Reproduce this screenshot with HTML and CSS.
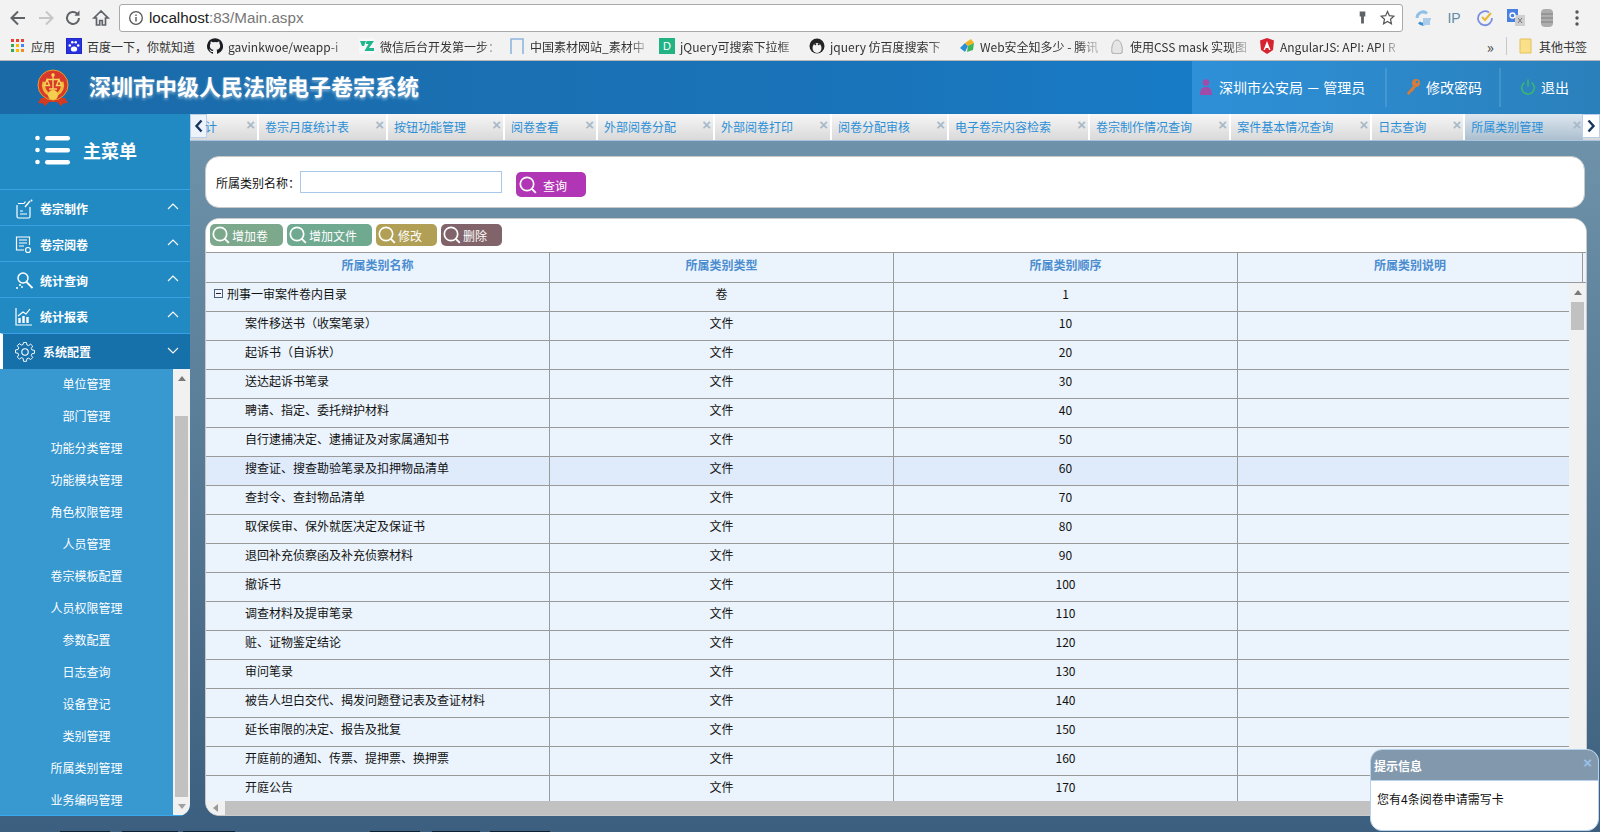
FILE: index.html
```html
<!DOCTYPE html>
<html lang="zh-CN">
<head>
<meta charset="utf-8">
<title>深圳市中级人民法院电子卷宗系统</title>
<link rel="stylesheet" href="styles.css">
</head>
<body>
<div class="browser">
  <div class="toolbar">
    <svg class="nav" viewBox="0 0 20 20"><path d="M17 10H4M10 3.500 3.500 10l6.500 6.500" fill="none" stroke="#5f6368" stroke-width="2"/></svg>
    <svg class="nav" viewBox="0 0 20 20"><path d="M3 10h13M10 3.500l6.500 6.500-6.500 6.500" fill="none" stroke="#c4c6c8" stroke-width="2"/></svg>
    <svg class="nav" viewBox="0 0 20 20"><path d="M16 10a6 6 0 1 1-1.800-4.300" fill="none" stroke="#5f6368" stroke-width="2"/><path d="M16.500 2.500v5.200h-5.200z" fill="#5f6368"/></svg>
    <svg class="nav" viewBox="0 0 20 20"><path d="M10 3 3 10h2.500v7h3.200v-4.500h2.600V17h3.200v-7H17z" fill="none" stroke="#5f6368" stroke-width="1.700"/></svg>
    <div class="address">
      <svg class="info" viewBox="0 0 16 16"><circle cx="8" cy="8" r="6.300" fill="none" stroke="#555" stroke-width="1.300"/><path d="M8 7v4.500M8 4.500v1.400" stroke="#555" stroke-width="1.400"/></svg>
      <span class="host">localhost</span><span class="path">:83/Main.aspx</span>
      <span class="spacer"></span>
      <svg class="addr-ico" viewBox="0 0 16 16"><path d="M5 1.500h6v5.500H9.500v7.500h-3V7H5z" fill="#5f6368"/></svg>
      <svg class="addr-ico star" viewBox="0 0 16 16"><path d="m8 1.600 2 4.500 4.800.5-3.600 3.200 1 4.800L8 12.200l-4.200 2.400 1-4.800L1.200 6.600 6 6.100z" fill="none" stroke="#555" stroke-width="1.300"/></svg>
    </div>
    <div class="exts">
      <svg viewBox="0 0 18 18"><path d="M3 9a6 6 0 0 1 10-4.500" fill="none" stroke="#8fc0e6" stroke-width="3"/><path d="M15 9a6 6 0 0 1-10 4.500" fill="none" stroke="#3f8ed0" stroke-width="3"/><rect x="9" y="9" width="7" height="7" fill="#a9cdea"/></svg>
      <span class="ext-ip">IP</span>
      <svg viewBox="0 0 18 18"><path d="M13 3.500A7 7 0 1 0 16 9" fill="none" stroke="#7a8fe0" stroke-width="1.800"/><path d="m6 8 3 3 6-7" fill="none" stroke="#eab733" stroke-width="2"/></svg>
      <svg viewBox="0 0 18 18"><rect x="0" y="0" width="11" height="13" fill="#4a80e0"/><rect x="8" y="6" width="10" height="11" fill="#cfcfcf"/><circle cx="5.500" cy="6.500" r="2.500" fill="none" stroke="#fff" stroke-width="1.300"/><path d="m11 9 4 5M15 9l-4 5" stroke="#777" stroke-width="1"/></svg>
      <svg viewBox="0 0 18 18"><rect x="3" y="0" width="12" height="18" rx="4" fill="#adadad"/><path d="M3 5h12M3 9h12M3 13h12" stroke="#8e8e8e" stroke-width="1.500"/></svg>
      <svg class="dots" viewBox="0 0 6 18"><circle cx="3" cy="3" r="1.700" fill="#555"/><circle cx="3" cy="9" r="1.700" fill="#555"/><circle cx="3" cy="15" r="1.700" fill="#555"/></svg>
    </div>
  </div>
  <div class="bookmarks">
    <div class="bm bm-apps">
      <svg class="bm-ico" viewBox="0 0 14 14"><g><rect x="0" y="0" width="3" height="3" fill="#e94235"/><rect x="5" y="0" width="3" height="3" fill="#e94235"/><rect x="10" y="0" width="3" height="3" fill="#e94235"/><rect x="0" y="5" width="3" height="3" fill="#34a853"/><rect x="5" y="5" width="3" height="3" fill="#fbbc05"/><rect x="10" y="5" width="3" height="3" fill="#4285f4"/><rect x="0" y="10" width="3" height="3" fill="#34a853"/><rect x="5" y="10" width="3" height="3" fill="#fbbc05"/><rect x="10" y="10" width="3" height="3" fill="#f28b1a"/></g></svg>
      <span>应用</span>
    </div>
    <div class="bm bm-baidu">
      <svg class="bm-ico" viewBox="0 0 16 16"><rect x=".5" y=".5" width="15" height="15" fill="#2932e1" stroke="#1f27c4"/><ellipse cx="8" cy="11" rx="3.200" ry="2.600" fill="#fff"/><circle cx="3.800" cy="7.500" r="1.300" fill="#fff"/><circle cx="12.200" cy="7.500" r="1.300" fill="#fff"/><circle cx="6.300" cy="4.300" r="1.300" fill="#fff"/><circle cx="9.700" cy="4.300" r="1.300" fill="#fff"/></svg>
      <span>百度一下，你就知道</span>
    </div>
    <div class="bm bm-w152">
      <svg class="bm-ico" viewBox="0 0 16 16"><path d="M8 .2a8 8 0 0 0-2.500 15.600c.4.100.5-.2.500-.4v-1.400c-2.200.5-2.700-1-2.700-1-.4-.9-.9-1.200-.9-1.200-.7-.5.100-.5.100-.5.800.1 1.200.8 1.200.8.700 1.200 1.900.9 2.300.7.100-.5.300-.9.500-1.100-1.800-.2-3.600-.9-3.600-4 0-.9.300-1.600.8-2.100-.1-.2-.4-1 .1-2.100 0 0 .7-.2 2.200.8a7.600 7.600 0 0 1 4 0c1.500-1 2.200-.8 2.200-.8.400 1.100.2 1.900.1 2.100.5.600.8 1.300.8 2.100 0 3.100-1.900 3.800-3.700 4 .3.300.6.700.6 1.500v2.200c0 .2.100.5.600.4A8 8 0 0 0 8 .2z" fill="#1b1f23"/></svg>
      <span>gavinkwoe/weapp-i</span>
    </div>
    <div class="bm">
      <svg class="bm-ico" viewBox="0 0 16 16"><rect width="16" height="16" fill="#f7f7f7"/><path d="M1 3h6L5 8H3zM7.500 3H15l-5 7h5v3H5.500l4-7H7z" fill="#1fb58f"/></svg>
      <span>微信后台开发第一步：</span>
    </div>
    <div class="bm">
      <svg class="bm-ico" viewBox="0 0 16 16"><path d="M2 16V1h12v15" fill="none" stroke="#8fb6dd" stroke-width="1.600"/></svg>
      <span>中国素材网站_素材中</span>
    </div>
    <div class="bm">
      <svg class="bm-ico" viewBox="0 0 16 16"><rect width="16" height="16" fill="#21b384"/><text x="8" y="12" font-size="11" text-anchor="middle" fill="#fff" class="bm-letter">D</text></svg>
      <span>jQuery可搜索下拉框</span>
    </div>
    <div class="bm">
      <svg class="bm-ico" viewBox="0 0 16 16"><circle cx="8" cy="8" r="7.500" fill="#222"/><ellipse cx="8" cy="10" rx="4.500" ry="5" fill="#f3f3f3"/><circle cx="6.300" cy="6.300" r="1" fill="#222"/><circle cx="9.700" cy="6.300" r="1" fill="#222"/></svg>
      <span>jquery 仿百度搜索下</span>
    </div>
    <div class="bm">
      <svg class="bm-ico" viewBox="0 0 16 16"><path d="M1 10 6 5l3 3-3 6z" fill="#2c8fd6"/><path d="M6 5l6-4 3 4-6 3z" fill="#f2b320"/><path d="M9 8l6-3-1 7-6 2z" fill="#3fb55a"/></svg>
      <span>Web安全知多少 - 腾讯</span>
    </div>
    <div class="bm">
      <svg class="bm-ico" viewBox="0 0 16 16"><path d="M3 15c-1-6 1-13 5-13s6 7 5 13c-3 1-7 1-10 0z" fill="#e5e5e5" stroke="#aaa"/></svg>
      <span>使用CSS mask 实现图</span>
    </div>
    <div class="bm">
      <svg class="bm-ico" viewBox="0 0 16 16"><path d="M8 0 1 2.500 2 12l6 4 6-4 1-9.500z" fill="#d6232f"/><path d="M8 3 4.500 12h1.500l.7-2h2.600l.7 2H11.500z" fill="#fff"/></svg>
      <span>AngularJS: API: API R</span>
    </div>
    <div class="bm-end">
      <span class="more">»</span>
      <span class="bm-sep"></span>
      <svg class="bm-ico" viewBox="0 0 16 16"><path d="M2 1h11v14H2z" fill="#fbe08a" stroke="#e3c25c"/></svg>
      <span class="bm-other">其他书签</span>
    </div>
  </div>
</div>

<header class="app-head">
  <div class="brand">
    <svg class="emblem" viewBox="0 0 32 37">
      <path d="M4 29 1 34l5 .5 2 2.500 4-4h8l4 4 2-2.500 5-.5-3-5z" fill="#d33a22"/>
      <circle cx="16" cy="16" r="15" fill="#d8392a" stroke="#e6a02c" stroke-width="1"/>
      <path d="M5.500 12.500a12 12 0 0 0 6 14.500l2.500-2a10 10 0 0 1-5.500-12zM26.500 12.500a12 12 0 0 1-6 14.500l-2.500-2a10 10 0 0 0 5.500-12z" fill="#f0b93a"/>
      <circle cx="16" cy="26" r="5" fill="#f4cf4f"/>
      <path d="M16 4.500V20M10 10.500h12M10 10.500l-2.500 6h5zM22 10.500l-2.500 6h5zM12 20h8" stroke="#f6d35b" stroke-width="1.400" fill="none"/>
      <circle cx="16" cy="6" r="1.800" fill="#f6d35b"/>
    </svg>
    <h1 class="title">深圳市中级人民法院电子卷宗系统</h1>
  </div>
  <div class="user-area">
    <div class="user-cell user-cell-a">
      <svg class="head-ico" viewBox="0 0 16 18"><circle cx="8" cy="4.500" r="3.300" fill="#a04ca8"/><path d="M2 17c0-6 2-8 6-8s6 2 6 8z" fill="#a04ca8"/></svg>
      <span>深圳市公安局 － 管理员</span>
    </div>
    <div class="user-cell user-cell-b">
      <svg class="head-ico" viewBox="0 0 16 18"><circle cx="11" cy="5" r="4" fill="#d77b39"/><path d="M8.500 7.500 2 15l1 2 2-1 1-2 1.500-.5L11 9z" fill="#d77b39"/><circle cx="12" cy="4" r="1.200" fill="#2e8dd2"/></svg>
      <span>修改密码</span>
    </div>
    <div class="user-cell user-cell-c">
      <svg class="head-ico" viewBox="0 0 16 18"><path d="M4.500 4.500a6.300 6.300 0 1 0 7 0" fill="none" stroke="#3dba6b" stroke-width="1.500"/><path d="M8 1.500v7" stroke="#3dba6b" stroke-width="1.500"/></svg>
      <span>退出</span>
    </div>
  </div>
</header>

<div class="app-body">
  <aside class="sidebar">
    <div class="menu-title">
      <svg class="burger" viewBox="0 0 36 30"><g fill="#fff"><circle cx="2.500" cy="3" r="2.300"/><circle cx="2.500" cy="15" r="2.300"/><circle cx="2.500" cy="27" r="2.300"/><rect x="10" y="1" width="25" height="4.400" rx="2.200"/><rect x="10" y="13" width="25" height="4.400" rx="2.200"/><rect x="10" y="25" width="25" height="4.400" rx="2.200"/></g></svg>
      <span>主菜单</span>
    </div>
    <div class="menu-item">
      <svg class="mi" viewBox="0 0 18 20"><path d="M3 4.500h6l1.500-2M15 8v9.500a1.500 1.500 0 0 1-1.500 1.500h-10A1.500 1.500 0 0 1 2 17.500V6" fill="none" stroke="#fff" stroke-width="1.200"/><path d="M5 15h7M5 12h3" stroke="#fff" stroke-width="1.200"/><path d="m10 8 5-6" stroke="#fff" stroke-width="1.400"/><circle cx="16.500" cy="1.500" r="1" fill="#fff"/></svg>
      <span>卷宗制作</span>
      <svg class="chev" viewBox="0 0 12 7"><path d="m1 6 5-5 5 5" fill="none" stroke="#fff" stroke-width="1.100"/></svg>
    </div>
    <div class="menu-item">
      <svg class="mi" viewBox="0 0 18 20"><path d="M9 15H1.500V2h13v8" fill="none" stroke="#fff" stroke-width="1.200"/><path d="M4 5h8M4 8h8M4 11h5" stroke="#fff" stroke-width="1.200"/><circle cx="13" cy="15" r="2.500" fill="none" stroke="#fff" stroke-width="1.200"/></svg>
      <span>卷宗阅卷</span>
      <svg class="chev" viewBox="0 0 12 7"><path d="m1 6 5-5 5 5" fill="none" stroke="#fff" stroke-width="1.100"/></svg>
    </div>
    <div class="menu-item">
      <svg class="mi" viewBox="0 0 18 20"><circle cx="8" cy="7" r="5" fill="none" stroke="#fff" stroke-width="1.500"/><path d="m11.500 11 6 6" stroke="#fff" stroke-width="1.800"/><path d="M1 17h2M4 14h2M7 15v2" stroke="#fff" stroke-width="1.400"/></svg>
      <span>统计查询</span>
      <svg class="chev" viewBox="0 0 12 7"><path d="m1 6 5-5 5 5" fill="none" stroke="#fff" stroke-width="1.100"/></svg>
    </div>
    <div class="menu-item">
      <svg class="mi" viewBox="0 0 18 20"><path d="M1 1v17h16" fill="none" stroke="#fff" stroke-width="1.200"/><path d="M4.500 16v-5M8.500 16V9M12.500 16v-6" stroke="#fff" stroke-width="2.400"/><path d="m3 9 5-4 3 2 4-5" fill="none" stroke="#fff" stroke-width="1.200"/></svg>
      <span>统计报表</span>
      <svg class="chev" viewBox="0 0 12 7"><path d="m1 6 5-5 5 5" fill="none" stroke="#fff" stroke-width="1.100"/></svg>
    </div>
    <div class="menu-item active">
      <svg class="mi mi-gear" viewBox="0 0 20 20"><circle cx="10" cy="10" r="3.200" fill="none" stroke="#fff" stroke-width="1.100"/><path d="M8.500 1h3l.5 2.600 1.700.7L16 2.800l2.100 2.100-1.500 2.300.7 1.700 2.700.5v3l-2.700.5-.7 1.700 1.500 2.300-2.100 2.100-2.300-1.500-1.700.7-.5 2.700h-3L8 17.700l-1.700-.7L4 18.500l-2.100-2.100 1.500-2.300-.7-1.700L0 11.900v-3l2.700-.5.7-1.700-1.500-2.300L4 2.300l2.300 1.500L8 3.100z" fill="none" stroke="#fff" stroke-width="1" transform="translate(.5 -.5) scale(.95)"/></svg>
      <span>系统配置</span>
      <svg class="chev" viewBox="0 0 12 7"><path d="m1 1 5 5 5-5" fill="none" stroke="#fff" stroke-width="1.100"/></svg>
    </div>
    <div class="submenu">
      <ul class="sub-list">
        <li>单位管理</li><li>部门管理</li><li>功能分类管理</li><li>功能模块管理</li><li>角色权限管理</li><li>人员管理</li><li>卷宗模板配置</li><li>人员权限管理</li><li>参数配置</li><li>日志查询</li><li>设备登记</li><li>类别管理</li><li>所属类别管理</li><li>业务编码管理</li>
      </ul>
      <div class="vbar vbar-side">
        <i class="arrow-up"></i>
        <div class="vtrack"><div class="thumb-side"></div></div>
        <i class="arrow-down"></i>
      </div>
    </div>
  </aside>

  <main class="content">
    <nav class="tabs">
      <button class="tab-nav tab-prev" type="button"><svg viewBox="0 0 10 14"><path d="M7.500 1.500 2.500 7l5 5.500" fill="none" stroke="#16365f" stroke-width="2.400"/></svg></button>
      <div class="tab tab-first">计<b>×</b></div>
      <div class="tab">卷宗月度统计表<b>×</b></div>
      <div class="tab">按钮功能管理<b>×</b></div>
      <div class="tab">阅卷查看<b>×</b></div>
      <div class="tab">外部阅卷分配<b>×</b></div>
      <div class="tab">外部阅卷打印<b>×</b></div>
      <div class="tab">阅卷分配审核<b>×</b></div>
      <div class="tab">电子卷宗内容检索<b>×</b></div>
      <div class="tab">卷宗制作情况查询<b>×</b></div>
      <div class="tab">案件基本情况查询<b>×</b></div>
      <div class="tab">日志查询<b>×</b></div>
      <div class="tab tab-on">所属类别管理<b>×</b></div>
      <button class="tab-nav tab-next" type="button"><svg viewBox="0 0 10 14"><path d="m2.500 1.500 5 5.500-5 5.500" fill="none" stroke="#16365f" stroke-width="2.400"/></svg></button>
    </nav>
    <div class="panes">
      <section class="search-panel">
        <label class="search-label" for="q">所属类别名称：</label>
        <input id="q" class="search-input" type="text">
        <button class="btn btn-query" type="button">
          <svg class="btn-ico" viewBox="0 0 20 20"><circle cx="9" cy="9" r="6.700" fill="none" stroke="#fff" stroke-width="1.700"/><path d="m13.800 13.800 4 4" stroke="#fff" stroke-width="1.900"/></svg>
          <span>查询</span>
        </button>
      </section>
      <section class="grid-panel">
        <div class="grid-tools">
          <button class="btn btn-a" type="button"><svg class="btn-ico" viewBox="0 0 20 20"><circle cx="9" cy="9" r="6.700" fill="none" stroke="#fff" stroke-width="1.700"/><path d="m13.800 13.800 4 4" stroke="#fff" stroke-width="1.900"/></svg><span>增加卷</span></button>
          <button class="btn btn-b" type="button"><svg class="btn-ico" viewBox="0 0 20 20"><circle cx="9" cy="9" r="6.700" fill="none" stroke="#fff" stroke-width="1.700"/><path d="m13.800 13.800 4 4" stroke="#fff" stroke-width="1.900"/></svg><span>增加文件</span></button>
          <button class="btn btn-c" type="button"><svg class="btn-ico" viewBox="0 0 20 20"><circle cx="9" cy="9" r="6.700" fill="none" stroke="#fff" stroke-width="1.700"/><path d="m13.800 13.800 4 4" stroke="#fff" stroke-width="1.900"/></svg><span>修改</span></button>
          <button class="btn btn-d" type="button"><svg class="btn-ico" viewBox="0 0 20 20"><circle cx="9" cy="9" r="6.700" fill="none" stroke="#fff" stroke-width="1.700"/><path d="m13.800 13.800 4 4" stroke="#fff" stroke-width="1.900"/></svg><span>删除</span></button>
        </div>
        <div class="grid-head">
          <div>所属类别名称</div><div>所属类别类型</div><div>所属类别顺序</div><div>所属类别说明</div>
        </div>
        <div class="grid-main">
          <div class="grid-rows">
            <div class="row"><div class="c1 tree"><i class="minus"></i>刑事一审案件卷内目录</div><div>卷</div><div>1</div><div></div></div>
            <div class="row"><div class="c1">案件移送书（收案笔录）</div><div>文件</div><div>10</div><div></div></div>
            <div class="row"><div class="c1">起诉书（自诉状）</div><div>文件</div><div>20</div><div></div></div>
            <div class="row"><div class="c1">送达起诉书笔录</div><div>文件</div><div>30</div><div></div></div>
            <div class="row"><div class="c1">聘请、指定、委托辩护材料</div><div>文件</div><div>40</div><div></div></div>
            <div class="row"><div class="c1">自行逮捕决定、逮捕证及对家属通知书</div><div>文件</div><div>50</div><div></div></div>
            <div class="row row-hot"><div class="c1">搜查证、搜查勘验笔录及扣押物品清单</div><div>文件</div><div>60</div><div></div></div>
            <div class="row"><div class="c1">查封令、查封物品清单</div><div>文件</div><div>70</div><div></div></div>
            <div class="row"><div class="c1">取保侯审、保外就医决定及保证书</div><div>文件</div><div>80</div><div></div></div>
            <div class="row"><div class="c1">退回补充侦察函及补充侦察材料</div><div>文件</div><div>90</div><div></div></div>
            <div class="row"><div class="c1">撤诉书</div><div>文件</div><div>100</div><div></div></div>
            <div class="row"><div class="c1">调查材料及提审笔录</div><div>文件</div><div>110</div><div></div></div>
            <div class="row"><div class="c1">赃、证物鉴定结论</div><div>文件</div><div>120</div><div></div></div>
            <div class="row"><div class="c1">审问笔录</div><div>文件</div><div>130</div><div></div></div>
            <div class="row"><div class="c1">被告人坦白交代、揭发问题登记表及查证材料</div><div>文件</div><div>140</div><div></div></div>
            <div class="row"><div class="c1">延长审限的决定、报告及批复</div><div>文件</div><div>150</div><div></div></div>
            <div class="row"><div class="c1">开庭前的通知、传票、提押票、换押票</div><div>文件</div><div>160</div><div></div></div>
            <div class="row"><div class="c1">开庭公告</div><div>文件</div><div>170</div><div></div></div>
          </div>
          <div class="vbar vbar-grid">
            <i class="arrow-up"></i>
            <div class="vtrack"><div class="thumb-grid"></div></div>
          </div>
        </div>
        <div class="hbar"><i class="arrow-left"></i><div class="hthumb"></div></div>
      </section>
    </div>
  </main>
</div>
<div class="edge"></div>

<aside class="toast">
  <div class="toast-head"><span>提示信息</span><b>×</b></div>
  <div class="toast-body">您有4条阅卷申请需写卡</div>
</aside>
</body>
</html>
```
FILE: styles.css
```css
* { box-sizing: border-box; }
html, body { margin: 0; height: 832px; overflow: hidden; }
body {
  position: relative;
  display: flex;
  flex-direction: column;
  width: 1600px;
  font: 12px "Noto Sans CJK SC", "Liberation Sans", sans-serif;
  color: #111;
  background: #3d5f7f;
}
svg { display: block; flex: none; }

/* browser chrome */
.browser { height: 61px; flex: none; background: #f2f2f2; border-bottom: 1px solid #b8b8b8; }
.toolbar { height: 35px; display: flex; align-items: center; padding: 0 0 0 8px; }
.nav { width: 20px; height: 20px; margin-right: 7.500px; }
.address {
  width: 1284px; height: 28px; margin-left: 1px; display: flex; align-items: center;
  background: #fff; border: 1px solid #a9a9a9; border-radius: 3px; padding: 0 7px 0 8px;
  font: 15.200px "Liberation Sans", sans-serif;
}
.info { width: 16px; height: 16px; margin-right: 5px; }
.host { color: #222; }
.path { color: #777; }
.spacer { flex: 1; }
.addr-ico { width: 15px; height: 15px; margin-left: 7px; }
.star { margin-left: 10px; }
.exts { display: flex; align-items: center; margin-left: 11px; flex: 1; }
.exts svg { width: 18px; height: 18px; margin-right: 13px; }
.exts .dots { width: 6px; margin-left: 5px; margin-right: 0; }
.ext-ip { width: 18px; margin-right: 13px; font: 14px "Liberation Sans", sans-serif; color: #5f8ca8; text-align: center; }
.bookmarks { height: 25px; display: flex; align-items: center; padding: 0 0 3px 11px; color: #333; }
.bm {
  width: 150px; flex: none; display: flex; align-items: center; overflow: hidden; white-space: nowrap;
  -webkit-mask-image: linear-gradient(90deg, #000 80%, rgba(0, 0, 0, .35) 90%);
  mask-image: linear-gradient(90deg, #000 80%, rgba(0, 0, 0, .35) 90%);
}
.bm-apps { width: 55px; -webkit-mask-image: none; mask-image: none; }
.bm-baidu { width: 141px; -webkit-mask-image: none; mask-image: none; }
.bm-w152 { width: 152px; }
.bm-ico { width: 16px; height: 16px; margin-right: 5px; }
.bm-apps .bm-ico { width: 14px; height: 14px; margin-right: 6px; }
.bm-letter { font-family: "Liberation Sans", sans-serif; }
.bm-end { display: flex; align-items: center; margin-left: auto; padding-right: 13px; }
.more { font-size: 15px; margin-right: 12px; color: #444; }
.bm-sep { width: 1px; height: 18px; background: #c8c8c8; margin-right: 11px; }
.bm-other { color: #333; }

/* app header */
.app-head {
  height: 53px; flex: none; display: flex; justify-content: space-between;
  background: linear-gradient(90deg, #1a6aa8 0%, #1a74ba 55%, #1585d5 100%);
}
.brand { display: flex; align-items: center; padding-left: 37px; }
.emblem { width: 32px; height: 37px; margin-right: 20px; }
.title {
  margin: -5px 0 0; font-size: 22px; font-weight: 700; color: #fff;
  text-shadow: 0 2px 3px rgba(255, 255, 255, .45);
}
.user-area {
  width: 408px; display: flex; padding: 7px 0;
  background: linear-gradient(90deg, #2e90d8, #2a80bb);
  color: #fff; font-size: 14px;
}
.user-cell { display: flex; align-items: center; gap: 5px; padding-bottom: 2px; border-right: 2px solid rgba(255, 255, 255, .12); }
.user-cell-a { width: 195px; padding-left: 6px; }
.user-cell-b { width: 114px; padding-left: 18px; }
.user-cell-c { border-right: 0; padding-left: 19px; }
.head-ico { width: 16px; height: 18px; }

/* main */
.app-body { flex: 1; display: flex; padding-bottom: 15px; background: linear-gradient(180deg, #7094ab 0%, #3d5f7f 100%); min-height: 0; }
.edge {
  height: 1px; flex: none;
  background: linear-gradient(90deg, #3d5f7f 60px, #0d2230 60px 110px, #3d5f7f 110px 122px, #0d2230 122px 178px, #3d5f7f 178px 183px, #0d2230 183px 235px, #3d5f7f 235px 370px, #0d2230 370px 420px, #3d5f7f 420px 432px, #0d2230 432px 480px, #3d5f7f 480px 490px, #0d2230 490px 550px, #3d5f7f 550px);
}
.sidebar {
  width: 190px; flex: none; display: flex; flex-direction: column; background: #228ac3; color: #fff;
  border-bottom-right-radius: 12px; overflow: hidden;
}
.menu-title {
  height: 75px; flex: none; display: flex; align-items: center; padding: 0 0 4px 35px; gap: 12px;
  font-size: 18px; font-weight: 700;
}
.burger { width: 36px; height: 30px; }
.menu-item {
  height: 36px; flex: none; display: flex; align-items: center; padding: 2px 11px 0 15px;
  border-top: 1px solid #3ca1e4; font-weight: 700;
}
.mi { width: 18px; height: 20px; margin-right: 7px; }
.menu-item .chev { width: 12px; height: 7px; margin: -5px 0 0 auto; }
.menu-item.active { background: #1670aa; border-left: 3px solid #fff; padding: 0 11px 0 12px; }
.menu-item.active .chev { margin-top: -2px; }
.mi-gear { width: 20px; height: 20px; margin-right: 8px; }
.submenu { flex: 1; display: flex; min-height: 0; background: #3898d0; border-bottom: 1px solid #3aa8ee; }
.sub-list { flex: 1; margin: 0; padding: 0; list-style: none; overflow: hidden; }
.sub-list li { height: 32px; line-height: 30px; text-align: center; color: #fff; }
.vbar { width: 17px; flex: none; display: flex; flex-direction: column; align-items: center; background: #f1f1f1; }
.vtrack { flex: 1; width: 100%; padding: 0 2px; min-height: 0; }
.arrow-up { flex: none; margin: 7px 0 7px; width: 0; height: 0; border: 4px solid transparent; border-top: 0; border-bottom: 5px solid #7a7a7a; }
.arrow-down { flex: none; margin: 7px 0 6px; width: 0; height: 0; border: 4px solid transparent; border-bottom: 0; border-top: 5px solid #a0a0a0; }
.thumb-side { height: 381px; margin-top: 28px; background: #c1c1c1; }
.thumb-grid { height: 28px; background: #c1c1c1; }

.content { flex: 1; min-width: 0; display: flex; flex-direction: column; position: relative; }
.tabs { height: 27px; flex: none; display: flex; background: linear-gradient(180deg, #f6f6f6, #d9d9d9); border-bottom: 1px solid #a9c4e0; overflow: hidden; position: relative; }
.tab {
  height: 26px; flex: none; position: relative; padding: 0 37px 0 6px; line-height: 25px; color: #2b8fd6;
  border-right: 2px solid #fff; white-space: nowrap;
}
.tab-first { width: 69px; padding: 0 0 0 15px; }
.tab b { position: absolute; right: 2px; top: -1px; font: 700 15px/24px "Liberation Sans", sans-serif; color: #a7b9c7; }
.tab-on { background: linear-gradient(180deg, #dde6ef, #acbfcf); width: 118px; border-right: 0; }
.tab-nav { position: absolute; top: 0; width: 17px; height: 24px; padding: 0 0 0 3px; background: #edf3fb; border: 1px solid #b9cfe9; }
.tab-nav svg { width: 10px; height: 14px; }
.tab-prev { left: 0; }
.tab-next { right: 0; width: 18px; background: #fff; }

.panes { flex: 1; min-height: 0; display: flex; flex-direction: column; padding: 15px 13px 0 15px; gap: 10px; }
.search-panel {
  height: 52px; flex: none; margin-right: 2px; display: flex; align-items: center; padding: 0 0 0 10px;
  background: #fff; border: 1px solid #c9c9c9; border-radius: 14px;
}
.search-label { width: 84px; }
.search-input { width: 202px; height: 22px; padding: 0; background: #fff; border: 1px solid #a9c8ea; outline: 0; }
.btn {
  display: flex; align-items: center; height: 22px; padding: 0 0 0 1px; border: 0; border-radius: 5px; color: #fff;
  font: 12px "Noto Sans CJK SC", sans-serif;
}
.btn-ico { width: 20px; height: 20px; margin-right: 1px; }
.btn-query { width: 70px; height: 25px; margin: 5px 0 0 14px; background: #b036b5; padding-left: 2px; }
.btn-query .btn-ico { margin-right: 5px; }
.btn-query span { padding-top: 1px; }
.grid-panel {
  flex: 1; min-height: 0; display: flex; flex-direction: column; background: #ebf4fc;
  border: 1px solid #c9c9c9; border-radius: 14px 14px 0 14px; overflow: hidden;
}
.grid-tools { height: 34px; flex: none; display: flex; gap: 4px; padding: 5px 0 0 4px; background: #fff; border-bottom: 1px solid #9a9a9a; }
.btn-a { width: 73px; background: #7ca88c; }
.btn-b { width: 85px; background: #6fa990; }
.btn-c { width: 61px; background: #b09f55; }
.btn-d { width: 61px; background: #80646a; }
.grid-head { height: 30px; flex: none; display: grid; grid-template-columns: 344px 344px 344px 345px 1fr; border-bottom: 1px solid #9a9a9a; color: #4b8dd0; font-weight: 700; }
.grid-head > div { line-height: 23px; text-align: center; border-right: 1px solid #9a9a9a; }
.grid-main { flex: 1; min-height: 0; display: flex; }
.grid-rows { flex: 1; min-width: 0; overflow: hidden; }
.row { height: 29px; display: grid; grid-template-columns: 344px 344px 344px 1fr; border-bottom: 1px solid #9a9a9a; }
.row > div { line-height: 21px; text-align: center; border-right: 1px solid #9a9a9a; }
.row > div:last-child { border-right: 0; }
.row > .c1 { text-align: left; padding-left: 39px; }
.row > .tree { padding-left: 8px; display: flex; align-items: center; height: 28px; line-height: 21px; padding-bottom: 7px; }
.row-hot { background: #dfebfb; }
.minus {
  position: relative; width: 9px; height: 9px; margin-right: 4px; background: #f2f5fa; border: 1px solid #4a5f80; flex: none;
}
.minus::after { content: ""; position: absolute; left: 1px; right: 1px; top: 3px; height: 1px; background: #223; }
.hbar { height: 14px; flex: none; display: flex; background: #f1f1f1; }
.arrow-left { flex: none; margin: 3px 7px 0 7px; width: 0; height: 0; border: 4px solid transparent; border-left: 0; border-right: 5px solid #9a9a9a; }
.hthumb { flex: none; width: 1347px; background: #c1c1c1; }

.toast {
  position: absolute; left: 1370px; top: 749px; width: 229px; height: 82px; background: #fff;
  border: 1px solid #b8d2ee; border-radius: 12px; overflow: hidden;
}
.toast-head {
  height: 31px; display: flex; justify-content: space-between; align-items: center; padding: 0 6px 0 3px;
  background: #8299ad; border-bottom: 1px solid #b8d2ee; color: #fff; font-weight: 700; font-size: 12px;
}
.toast-head b { font: 700 15px "Liberation Sans", sans-serif; color: #9bc0ea; margin-top: -5px; }
.toast-body { padding: 9px 0 0 6px; }
```
